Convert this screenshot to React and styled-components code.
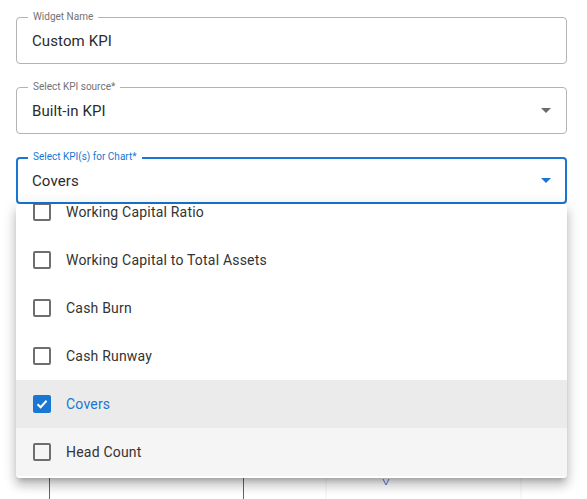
import React from 'react';
import styled, { createGlobalStyle } from 'styled-components';

const GlobalStyle = createGlobalStyle`
  html, body {
    margin: 0;
    padding: 0;
    background: #fff;
    font-family: Roboto, "Noto Sans", "Liberation Sans", sans-serif;
  }
  * { box-sizing: border-box; }
`;

const Page = styled.div`
  position: relative;
  width: 587px;
  height: 499px;
  overflow: hidden;
  padding: 17px 20px 0 16px;
  display: flex;
  flex-direction: column;
  gap: 23px;
`;

const Field = styled.div`
  position: relative;
  height: 47px;
  border: ${(p) => (p.focused ? '2px solid #1976d2' : '1px solid #b3b3b3')};
  border-radius: 4px;
  display: flex;
  align-items: center;
  padding: 0 ${(p) => (p.focused ? '14px' : '15px')};
`;

const Label = styled.span`
  position: absolute;
  top: ${(p) => (p.focused ? '-8px' : '-7px')};
  left: ${(p) => (p.focused ? '10px' : '11px')};
  padding: 0 5px;
  background: #fff;
  font-size: 10px;
  line-height: 12px;
  color: ${(p) => (p.focused ? '#1976d2' : '#737373')};
`;

const Value = styled.span`
  flex: 1;
  font-size: 15px;
  color: #2b2b2b;
  letter-spacing: 0.1px;
`;

const Caret = styled.span`
  width: 0;
  height: 0;
  border-left: 5px solid transparent;
  border-right: 5px solid transparent;
  border-top: 5px solid ${(p) => (p.focused ? '#1976d2' : '#6b6b6b')};
`;

const Chart = styled.svg`
  display: block;
  flex: 1;
  margin-left: -16px;
`;

const Menu = styled.div`
  position: absolute;
  left: 16px;
  top: 204px;
  width: 551px;
  height: 274px;
  overflow: hidden;
  background: #fff;
  border-radius: 4px;
  box-shadow: 0px 5px 5px -3px rgba(0, 0, 0, 0.2),
    0px 8px 10px 1px rgba(0, 0, 0, 0.14), 0px 3px 14px 2px rgba(0, 0, 0, 0.12);
`;

const List = styled.ul`
  list-style: none;
  margin: -16px 0 0;
  padding: 0;
`;

const Item = styled.li`
  height: 48px;
  display: flex;
  align-items: center;
  padding-left: 17px;
  gap: 15px;
  font-size: 14px;
  letter-spacing: 0.2px;
  color: ${(p) => (p.selected ? '#1976d2' : '#333')};
  background: ${(p) => (p.selected ? '#ebebeb' : p.hover ? '#f5f5f5' : 'transparent')};
`;

const Box = styled.span`
  width: 18px;
  height: 18px;
  border-radius: 2px;
  border: ${(p) => (p.checked ? 'none' : '2px solid #6e6e6e')};
  background: ${(p) => (p.checked ? '#1976d2' : 'transparent')};
  display: flex;
  align-items: center;
  justify-content: center;
`;

const items = [
  { name: 'Working Capital Ratio' },
  { name: 'Working Capital to Total Assets' },
  { name: 'Cash Burn' },
  { name: 'Cash Runway' },
  { name: 'Covers', selected: true },
  { name: 'Head Count', hover: true },
];

const Check = () => (
  <svg width="14" height="14" viewBox="0 0 14 14">
    <path d="M2.5 7.2 5.6 10.2 11.6 3.8" fill="none" stroke="#fff" strokeWidth="2" />
  </svg>
);

export default function App() {
  return (
    <>
      <GlobalStyle />
      <Page>
        <Field>
          <Label>Widget Name</Label>
          <Value>Custom KPI</Value>
        </Field>
        <Field>
          <Label>Select KPI source*</Label>
          <Value>Built-in KPI</Value>
          <Caret />
        </Field>
        <Field focused>
          <Label focused>Select KPI(s) for Chart*</Label>
          <Value>Covers</Value>
          <Caret focused />
        </Field>
        <Chart width="587" height="300">
          <line x1="326" y1="0" x2="326" y2="300" stroke="#f0f0f0" />
          <line x1="521" y1="0" x2="521" y2="300" stroke="#f0f0f0" />
          <line x1="49.5" y1="0" x2="49.5" y2="300" stroke="#1976d2" />
          <line x1="243.5" y1="0" x2="243.5" y2="300" stroke="#1976d2" />
          <path d="M383 252 L386 258 L389 252" fill="none" stroke="#5b6fd6" strokeWidth="1" />
        </Chart>
        <Menu>
          <List>
            {items.map((it) => (
              <Item key={it.name} selected={it.selected} hover={it.hover}>
                <Box checked={it.selected}>{it.selected && <Check />}</Box>
                {it.name}
              </Item>
            ))}
          </List>
        </Menu>
      </Page>
    </>
  );
}
